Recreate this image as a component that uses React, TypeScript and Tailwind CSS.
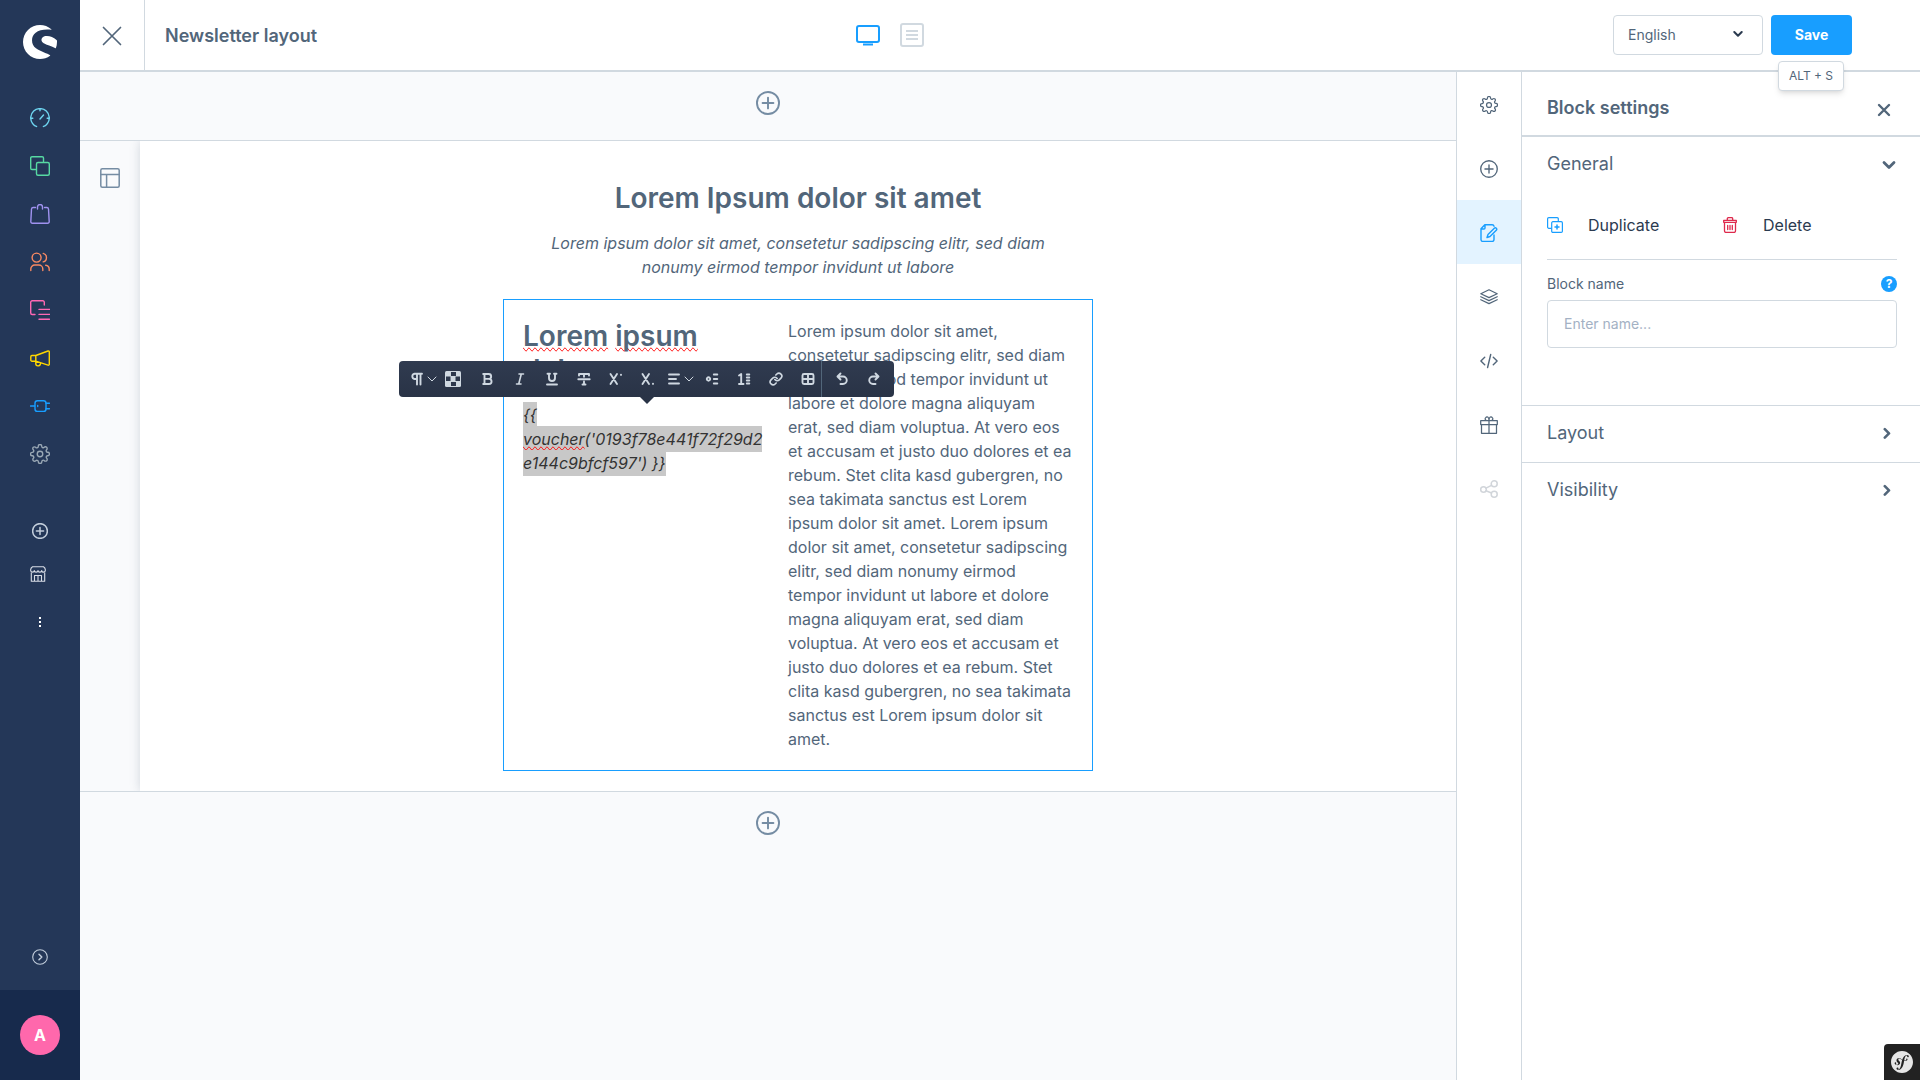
import { useState } from 'react'
import type { ReactNode } from 'react'
import { SiShopware, SiSymfony } from 'react-icons/si'

function Svg({ box = '0 0 20 20', className, width = 1.4, children }: { box?: string; className: string; width?: number; children: ReactNode }) {
  return (
    <svg
      viewBox={box}
      className={`shrink-0 ${className}`}
      fill="none"
      stroke="currentColor"
      strokeWidth={width}
      strokeLinecap="round"
      strokeLinejoin="round"
      aria-hidden="true"
    >
      {children}
    </svg>
  )
}

function GearIcon({ className }: { className: string }) {
  return (
    <Svg box="0.4 0.4 23.2 23.2" className={className} width={1.6}>
      <circle cx="12" cy="12" r="3.2" />
      <path d="M19.4 15a1.65 1.65 0 0 0 .33 1.82l.06.06a2 2 0 0 1 0 2.83 2 2 0 0 1-2.83 0l-.06-.06a1.65 1.65 0 0 0-1.82-.33 1.65 1.65 0 0 0-1 1.51V21a2 2 0 0 1-2 2 2 2 0 0 1-2-2v-.09A1.65 1.65 0 0 0 9 19.4a1.65 1.65 0 0 0-1.82.33l-.06.06a2 2 0 0 1-2.83 0 2 2 0 0 1 0-2.83l.06-.06a1.65 1.65 0 0 0 .33-1.82 1.65 1.65 0 0 0-1.51-1H3a2 2 0 0 1-2-2 2 2 0 0 1 2-2h.09A1.65 1.65 0 0 0 4.6 9a1.65 1.65 0 0 0-.33-1.82l-.06-.06a2 2 0 0 1 0-2.83 2 2 0 0 1 2.83 0l.06.06a1.65 1.65 0 0 0 1.82.33H9a1.65 1.65 0 0 0 1-1.51V3a2 2 0 0 1 2-2 2 2 0 0 1 2 2v.09a1.65 1.65 0 0 0 1 1.51 1.65 1.65 0 0 0 1.82-.33l.06-.06a2 2 0 0 1 2.83 0 2 2 0 0 1 0 2.83l-.06.06a1.65 1.65 0 0 0-.33 1.82V9a1.65 1.65 0 0 0 1.51 1H21a2 2 0 0 1 2 2 2 2 0 0 1-2 2h-.09a1.65 1.65 0 0 0-1.51 1z" />
    </Svg>
  )
}

function PlusCircle({ className, width = 1.25 }: { className: string; width?: number }) {
  return (
    <Svg className={className} width={width}>
      <circle cx="10" cy="10" r="9.2" />
      <path d="M10 5.5v9M5.5 10h9" />
    </Svg>
  )
}

const mainMenu = [
  {
    label: 'Dashboard',
    color: 'text-[#6ed5f0]',
    icon: (
      <Svg className="size-5">
        <path d="M6.6 18.5c-1.6 0-2.9-1.2-3.9-2.8A9.3 9.3 0 1 1 17.3 15.7c-1 1.6-2.3 2.8-3.9 2.8M10 .8v2M.8 10.2h2M19.2 10.2h-2M10 11l3.5-4" />
      </Svg>
    ),
  },
  {
    label: 'Catalogues',
    color: 'text-[#57d9a3]',
    icon: (
      <Svg className="size-5">
        <path d="M5.5 13.5H2A1.3 1.3 0 0 1 .7 12.2V2A1.3 1.3 0 0 1 2 .7h10.2A1.3 1.3 0 0 1 13.5 2v3.5" />
        <rect x="6.5" y="6.5" width="12.8" height="12.8" rx="1.5" />
      </Svg>
    ),
  },
  {
    label: 'Orders',
    color: 'text-[#a092f0]',
    icon: (
      <Svg className="size-5">
        <path d="M5.5 3.5H3.2A1.7 1.7 0 0 0 1.5 5L.8 17.6a1.6 1.6 0 0 0 1.6 1.7h15.2a1.6 1.6 0 0 0 1.6-1.7L18.5 5a1.7 1.7 0 0 0-1.7-1.5h-2.3" />
        <path d="M7.5 5V3a2.5 2.5 0 0 1 5 0v2" />
      </Svg>
    ),
  },
  {
    label: 'Customers',
    color: 'text-[#f88962]',
    icon: (
      <Svg className="size-5">
        <circle cx="6.6" cy="5.6" r="4.5" />
        <path d="M.8 18.500v-1.500a4 4 0 0 1 4-4h4a4 4 0 0 1 4 4v1.500M13.200 1.400a4.400 4.400 0 0 1 0 8.500M15.700 13.300a4 4 0 0 1 3.500 4v1.200" />
      </Svg>
    ),
  },
  {
    label: 'Content',
    color: 'text-[#ff68b4]',
    icon: (
      <Svg className="size-5">
        <path d="M5 14.500H2.200A1.500 1.500 0 0 1 .7 13V2.200A1.500 1.500 0 0 1 2.200.7h10.600a1.500 1.500 0 0 1 1.500 1.500V5M9 9.400h10.500M9 14.400h10.500M9 19.300h10.500" />
      </Svg>
    ),
  },
  {
    label: 'Marketing',
    color: 'text-[#ffd700]',
    icon: (
      <Svg className="size-5">
        <path d="M5.800 7.500 18 3a1 1 0 0 1 1.300 1v12.200a1 1 0 0 1-1.300 1L5.800 13.200zM5.800 7.500H2A1.200 1.200 0 0 0 .8 8.700V12A1.200 1.200 0 0 0 2 13.200h3.800M5.800 13.500v1.800a2.300 2.300 0 0 0 4.600.5" />
      </Svg>
    ),
  },
  {
    label: 'Extensions',
    color: 'text-[#189eff]',
    icon: (
      <Svg className="size-5">
        <path d="M.6 10h4M16 7.200h3.500M16 12.800h3.500M7.700 9.400v1.200" />
        <rect x="5" y="4.800" width="11" height="10.600" rx="2.500" />
      </Svg>
    ),
  },
  { label: 'Settings', color: 'text-[#9aa8b5]', icon: <GearIcon className="size-5" /> },
]

const railItems = [
  { label: 'Settings', icon: <GearIcon className="size-[18px]" /> },
  { label: 'Blocks', icon: <PlusCircle className="size-[18px]" width={1.5} /> },
  {
    label: 'Block settings',
    active: true,
    icon: (
      <Svg box="0 0 18 18" className="size-[18px]">
        <path d="M14 11v4.500a2 2 0 0 1-2 2H3a2 2 0 0 1-2-2V4.800L4.800.7H12a2 2 0 0 1 2 1.500M1 5h3a1 1 0 0 0 1-1V.8" />
        <path d="m8 10.500 6.300-6.300a1.400 1.400 0 0 1 2 2L10 12.500l-3 1z" />
      </Svg>
    ),
  },
  {
    label: 'Navigator',
    icon: (
      <Svg box="0 0 18 18" className="size-[18px]" width={1.25}>
        <path d="m9 1.800 8.200 3.900L9 9.600.8 5.700zM.8 8.700 9 12.600l8.200-3.900M.8 11.700 9 15.600l8.200-3.900" />
      </Svg>
    ),
  },
  {
    label: 'Code',
    icon: (
      <Svg box="0 0 18 18" className="size-[18px]">
        <path d="M4.700 5.300.9 9l3.800 3.700M13.300 5.300 17.100 9l-3.800 3.700M10.700 2.500 7.600 15.500" />
      </Svg>
    ),
  },
  {
    label: 'Elements',
    icon: (
      <Svg box="0 0 18 18" className="size-[18px]" width={1.25}>
        <path d="M.7 4.700h16.600v3.800H.7zM1.500 8.500v8.800h15V8.500M9 4.700v12.600M9 4.500H6.800A1.700 1.700 0 0 1 5.700 1.600C6.800.2 9 .6 9 4.500zM9 4.500h2.200a1.700 1.700 0 0 0 1.100-2.900C11.200.2 9 .6 9 4.500z" />
      </Svg>
    ),
  },
  {
    label: 'Layout assignment',
    disabled: true,
    icon: (
      <Svg box="0 0 18 18" className="size-[18px]" width={1.5}>
        <circle cx="3.500" cy="9.500" r="2.800" />
        <circle cx="14.200" cy="3.800" r="3" />
        <circle cx="14.200" cy="14.200" r="3" />
        <path d="m6 8.200 5.500-2.900M6 10.800l5.500 2.200" />
      </Svg>
    ),
  },
]

// Drawn on a 16px grid
const toolbarItems = [
  { label: 'Format', wide: true, size: 'w-7', d: 'M7 8H5.500a2.700 2.700 0 0 1 0-5.300H13M8 3v10.500M11.500 3v10.500' },
  { label: 'Text color', size: 'w-8 mr-[3px]', checker: true },
  { label: 'Bold', size: 'w-8', d: 'M4.500 3v10M3.200 3h5.500a2.400 2.400 0 0 1 0 4.900H5M9 7.900a2.500 2.500 0 0 1 0 5.100H3.200' },
  { label: 'Italic', size: 'w-8', d: 'M7 3h4.500M4.500 13H9M9.300 3l-2.600 10', thin: true },
  { label: 'Underline', size: 'w-8', d: 'M3.500 2.800H6M10 2.800h2.500M5 3v4a3 3 0 0 0 6 0V3M3 13.500h10' },
  { label: 'Strikethrough', size: 'w-8', d: 'M3 4.500V3h10v1.500M8 3v2.800M2.300 8.200h11.400M8 10.500v3M6.500 13.500h3' },
  { label: 'Superscript', size: 'w-8', d: 'M2.500 3l6.500 10M9 3l-6.500 10M13 3.600v.3' },
  { label: 'Subscript', size: 'w-8', d: 'M2.500 3l6.500 10M9 3l-6.500 10M13 12.600v.3' },
  { label: 'Alignment', wide: true, size: 'w-8', d: 'M3 3.500h10M3 8h7M3 12.500h10' },
  { label: 'Bullet list', size: 'w-8', d: 'M2.800 8a1.700 1.700 0 1 0 3.400 0 1.700 1.700 0 1 0-3.400 0M9.800 3.500h3.500M9.800 8h3.500M9.800 12.500h3.500' },
  { label: 'Numbered list', size: 'w-8', d: 'M3 4.500 5.200 3v10M3 13h4.500M10.800 3.500h2.500M10.800 6.500h2.500M10.800 9.500h2.500M10.800 12.500h2.500' },
  { label: 'Link', size: 'w-8', link: true },
  {
    label: 'Table',
    size: 'w-[29px] pl-[3px]',
    d: 'M4 3h8a1.500 1.500 0 0 1 1.500 1.500v7A1.500 1.500 0 0 1 12 13H4a1.500 1.500 0 0 1-1.500-1.500v-7A1.500 1.500 0 0 1 4 3zM8 3v10M2.500 8h11',
  },
]

const historyItems = [
  { label: 'Undo', d: 'M6.500 2.500 3.500 5.500l3 3M4 5.500h5a3.700 3.700 0 0 1 0 7.500H6.500' },
  { label: 'Redo', d: 'M9.500 2.500l3 3-3 3M12 5.500H7a3.700 3.700 0 0 0 0 7.500h2.500' },
]

function ToolbarIcon({ item }: { item: { d?: string; checker?: boolean; link?: boolean; thin?: boolean } }) {
  if (item.checker) {
    return (
      <svg viewBox="0 0 16 16" className="size-4 shrink-0" aria-hidden="true">
        <rect width="16" height="16" rx="1.500" fill="#cfd8e1" />
        <path fill="#2d384d" d="M6 1h5v4H6zM1 5.500h4.500V10H1zM10.500 5.500H15V10h-4.500zM6 11h5v4H6z" />
      </svg>
    )
  }
  if (item.link) {
    return (
      <Svg box="0 0 24 24" className="size-3.5" width={2.8}>
        <path d="M10 13a5 5 0 0 0 7.540.540l3-3a5 5 0 0 0-7.070-7.070l-1.720 1.710" />
        <path d="M14 11a5 5 0 0 0-7.540-.540l-3 3a5 5 0 0 0 7.070 7.070l1.710-1.710" />
      </Svg>
    )
  }
  return (
    <Svg box="0 0 16 16" className="size-4" width={item.thin ? 1.6 : 1.9}>
      <path d={item.d} />
    </Svg>
  )
}

function Toolbar() {
  return (
    <div className="absolute top-[61px] -left-[105px] z-10 flex h-9 rounded bg-linear-to-b from-[#303b50] to-[#293346] text-[#cfd8e1]">
      <div className="flex items-center border-r border-[#52667a] pl-2.5">
        {toolbarItems.map((item) => (
          <button
            key={item.label}
            type="button"
            aria-label={item.label}
            className={`flex h-9 shrink-0 items-center justify-center gap-0.5 ${item.size}`}
          >
            <ToolbarIcon item={item} />
            {item.wide && (
              <Svg box="0 0 10 10" className="size-2.5" width={1}>
                <path d="m1 3 4 4 4-4" />
              </Svg>
            )}
          </button>
        ))}
      </div>
      <div className="flex items-center px-1">
        {historyItems.map((item) => (
          <button key={item.label} type="button" aria-label={item.label} className="flex h-9 w-8 items-center justify-center">
            <ToolbarIcon item={item} />
          </button>
        ))}
      </div>
      <div className="absolute top-full left-1/2 -translate-x-1/2 border-x-[7px] border-t-[7px] border-x-transparent border-t-[#293346]" />
    </div>
  )
}

function Misspelled({ children }: { children: ReactNode }) {
  return <span className="[text-decoration-line:spelling-error]">{children}</span>
}

function Sidebar() {
  return (
    <aside className="flex w-20 shrink-0 flex-col items-center bg-[#243758]">
      <SiShopware className="mt-[25px] size-[34px] text-white" />
      <nav className="mt-[35px] flex flex-col" aria-label="Main menu">
        {mainMenu.map((item) => (
          <a key={item.label} href="#" aria-label={item.label} className={`flex h-12 w-20 items-center justify-center ${item.color}`}>
            {item.icon}
          </a>
        ))}
      </nav>
      <div className="mt-[34px] flex flex-col items-center">
        <button type="button" aria-label="Add sales channel" className="flex h-[38px] w-20 items-center justify-center text-[#c2cddb]">
          <PlusCircle className="size-4" width={1.9} />
        </button>
        <a href="#" aria-label="Storefront" className="flex h-12 w-20 items-center pl-[30px] text-[#d8dde6]">
          <Svg box="0 0 16 16" className="size-4" width={1.1}>
            <path d="M1.300 6v9.300h13.400V6M.7 4.500A3.800 3.800 0 0 1 2.500.7h11a3.800 3.800 0 0 1 1.800 3.800c0 2.200-3.600 2.200-3.600 0 0 2.200-3.700 2.200-3.700 0 0 2.200-3.700 2.200-3.700 0 0 2.200-3.600 2.200-3.600 0zM4.500 15V9.500h7V15M8 9.500V15" />
          </Svg>
        </a>
        <button type="button" aria-label="More" className="flex h-12 w-20 items-center justify-center text-white">
          <svg viewBox="0 0 4 12" className="h-3 w-1" fill="currentColor" aria-hidden="true">
            <path d="M1 1h2v2H1zM1 5h2v2H1zM1 9h2v2H1z" />
          </svg>
        </button>
      </div>
      <button type="button" aria-label="Expand menu" className="mt-auto mb-[17px] flex h-8 w-20 items-center justify-center text-[#c2cddb]">
        <Svg box="0 0 16 16" className="size-4" width={1.1}>
          <circle cx="8" cy="8" r="7.300" />
          <path d="M7 5.200 9.800 8 7 10.800" strokeWidth="1.500" />
        </Svg>
      </button>
      <div className="flex h-[90px] w-full items-center justify-center bg-[#172a4c]">
        <button type="button" aria-label="Account" className="size-10 rounded-full bg-[#ff68ac] text-base font-bold text-white">
          A
        </button>
      </div>
    </aside>
  )
}

function Header() {
  return (
    <header className="flex h-[72px] shrink-0 border-b-2 border-[#d1d9e0] bg-white">
      <button type="button" aria-label="Close" className="flex w-[65px] items-center justify-center border-r border-[#d1d9e0] pt-0.5">
        <Svg className="size-5" width={1.7}>
          <path d="m1.500 1.500 17 17M18.500 1.500l-17 17" />
        </Svg>
      </button>
      <div className="grid flex-1 grid-cols-[5fr_auto_7fr] items-center">
        <h1 className="pt-0.5 pl-5 text-lg font-semibold">Newsletter layout</h1>
        <div className="flex items-center gap-5">
          <button type="button" aria-label="Desktop view" className="text-[#189eff]">
            <Svg box="0 0 24 24" className="size-6" width={2}>
              <rect x="1" y="3" width="22" height="16" rx="2" />
              <path d="M7 21.500h10" strokeLinecap="butt" />
            </Svg>
          </button>
          <button type="button" aria-label="Form view" className="text-[#d1d9e0]">
            <Svg box="0 0 24 24" className="size-6" width={2}>
              <rect x="1" y="1" width="22" height="22" rx="2" />
              <path d="M6 8h12M6 12h12M6 16h12" strokeLinecap="butt" />
            </Svg>
          </button>
        </div>
        <div className="flex items-center justify-end gap-2 pr-[68px]">
          <div className="relative">
            <select aria-label="Language" className="h-10 w-[150px] appearance-none rounded border border-[#d1d9e0] bg-white pl-3.5 text-sm">
              <option>English</option>
            </select>
            <Svg box="0 0 10 8" className="pointer-events-none absolute top-[15px] right-5 h-2 w-2.5 text-[#2b3a4f]" width={2}>
              <path d="m1.300 2 3.700 3.700L8.700 2" />
            </Svg>
          </div>
          <div className="relative">
            <button type="button" className="h-10 w-[81px] rounded bg-[#189eff] text-sm font-bold text-white">
              Save
            </button>
            <div className="absolute top-[46px] left-[7px] z-20 flex h-[30px] w-[66px] items-center justify-center rounded border border-[#d1d9e0] bg-white text-xs whitespace-nowrap shadow-md">
              ALT + S
            </div>
          </div>
        </div>
      </div>
    </header>
  )
}

function AddSection() {
  return (
    <div className="flex h-[62px] items-center justify-center">
      <button type="button" aria-label="Add section" className="text-[#758ca3]">
        <PlusCircle className="size-6" width={1.6} />
      </button>
    </div>
  )
}

function Canvas() {
  return (
    <main className="min-w-0 flex-1 bg-[#f9fafc]">
      <div className="pb-1.5">
        <AddSection />
      </div>
      <section className="flex border-y border-[#d1d9e0]">
        <div className="flex w-[60px] shrink-0 justify-center pt-[27px]">
          <button type="button" aria-label="Section settings" className="h-5 text-[#758ca3]">
            <Svg className="size-5" width={1.5}>
              <rect x=".8" y=".8" width="18.400" height="18.400" rx="1.500" />
              <path d="M.8 6.600h18.400M6.600 6.600v12.600" />
            </Svg>
          </button>
        </div>
        <div className="flex-1 bg-white py-5 shadow-[0_0_10px_0_rgba(82,102,122,0.24)] [clip-path:inset(0_0_0_-12px)]">
          <div className="mx-auto w-[590px]">
            <div className="p-5 text-center">
              <h2 className="text-[28px] leading-[34px] font-semibold">Lorem Ipsum dolor sit amet</h2>
              <p className="mt-4 px-5 text-base italic">
                Lorem ipsum dolor sit amet, consetetur sadipscing elitr, sed diam nonumy eirmod tempor invidunt ut labore
              </p>
            </div>
            <div className="relative flex border border-[#189eff]">
              <Toolbar />
              <div className="w-[264px] shrink-0 py-[19px] pl-[19px]">
                <h2 className="text-[28px] leading-[34px] font-semibold">
                  <Misspelled>Lorem</Misspelled> <Misspelled>ipsum</Misspelled>
                  <br />
                  dolor
                </h2>
                <p className="mt-4 text-base break-all text-[#333] italic">
                  <span className="bg-[#c8c8c8] py-[3px]">
                    {'{{ '}
                    <br />
                    <Misspelled>voucher</Misspelled>('0193f78e441f72f29d2
                    <br />
                    {"e144c9bfcf597') }}"}
                  </span>
                </p>
              </div>
              <p className="flex-1 py-[19px] pr-[19px] pl-5 text-base">
                Lorem ipsum dolor sit amet, consetetur sadipscing elitr, sed diam nonumy eirmod tempor invidunt ut labore et dolore magna
                aliquyam erat, sed diam voluptua. At vero eos et accusam et justo duo dolores et ea rebum. Stet clita kasd gubergren, no sea
                takimata sanctus est Lorem ipsum dolor sit amet. Lorem ipsum dolor sit amet, consetetur sadipscing elitr, sed diam nonumy
                eirmod tempor invidunt ut labore et dolore magna aliquyam erat, sed diam voluptua. At vero eos et accusam et justo duo dolores
                et ea rebum. Stet clita kasd gubergren, no sea takimata sanctus est Lorem ipsum dolor sit amet.
              </p>
            </div>
          </div>
        </div>
      </section>
      <AddSection />
    </main>
  )
}

function CollapsedGroup({ title }: { title: string }) {
  return (
    <button type="button" className="flex h-[57px] w-full items-center justify-between border-t border-[#d1d9e0] pr-[29px] pb-0.5 pl-[25px] text-lg">
      {title}
      <Svg box="0 0 8 12" className="h-3 w-2" width={2.6}>
        <path d="m1.800 2.200 4.200 4.200-4.200 4.200" />
      </Svg>
    </button>
  )
}

function SettingsPanel() {
  const [name, setName] = useState('')

  return (
    <section className="w-[398px] shrink-0 bg-white">
      <div className="flex h-[65px] items-center justify-between border-b-2 border-[#d1d9e0] pt-2 pr-[29px] pl-[25px]">
        <h2 className="text-lg font-semibold">Block settings</h2>
        <button type="button" aria-label="Close panel" className="pt-1">
          <Svg box="0 0 14 14" className="size-3.5" width={2.4}>
            <path d="m2 2 10 10M12 2 2 12" />
          </Svg>
        </button>
      </div>
      <button type="button" className="flex h-[54px] w-full items-center justify-between pr-6 pl-[25px] text-lg">
        General
        <Svg box="0 0 14 12" className="h-3 w-3.5" width={2.8}>
          <path d="m2 4.500 5 5 5-5" />
        </Svg>
      </button>
      <div className="pr-[23px] pl-[25px]">
        <div className="grid h-[69px] grid-cols-2 border-b border-[#d1d9e0] text-base text-[#2b3a4f]">
          <button type="button" className="flex items-center gap-[25px]">
            <Svg box="0 0 16 16" className="size-4 text-[#189eff]" width={1.2}>
              <path d="M4 11.300H1.800A1.200 1.200 0 0 1 .6 10.100V1.800A1.200 1.200 0 0 1 1.800.6h8.300a1.200 1.200 0 0 1 1.200 1.200V4" />
              <rect x="4.700" y="4.700" width="10.700" height="10.700" rx="1.200" />
              <path d="M10 8v4M8 10h4" strokeWidth="1.500" />
            </Svg>
            Duplicate
          </button>
          <button type="button" className="flex items-center gap-[25px]">
            <Svg box="0 0 16 16" className="size-4 text-[#de294c]" width={1.3}>
              <path d="M1.700 3.300h12.600v2H1.700zM2.500 5.300v8.700a1.400 1.400 0 0 0 1.400 1.400h8.200a1.400 1.400 0 0 0 1.400-1.400V5.300M5.300 3V1.800A1.200 1.200 0 0 1 6.500.6h3a1.200 1.200 0 0 1 1.200 1.200V3M5.700 8.500v4M8 8.500v4M10.300 8.500v4" />
            </Svg>
            Delete
          </button>
        </div>
        <div className="mt-4 flex items-center justify-between">
          <label htmlFor="block-name" className="text-sm leading-4">
            Block name
          </label>
          <button type="button" aria-label="Help" className="flex size-4 items-center justify-center rounded-full bg-[#189eff] text-xs font-bold text-white">
            ?
          </button>
        </div>
        <input
          id="block-name"
          value={name}
          onChange={(e) => setName(e.target.value)}
          placeholder="Enter name..."
          className="mt-2 mb-[57px] block h-12 w-full rounded border border-[#d1d9e0] px-4 pb-0.5 text-sm placeholder:text-[#a3b1c4]"
        />
      </div>
      <CollapsedGroup title="Layout" />
      <CollapsedGroup title="Visibility" />
    </section>
  )
}

export default function App() {
  return (
    <div className="flex min-h-screen bg-white font-['Inter',sans-serif] text-[#52667a]">
      <Sidebar />
      <div className="flex min-w-0 flex-1 flex-col">
        <Header />
        <div className="flex flex-1">
          <Canvas />
          <nav className="flex w-[66px] shrink-0 flex-col border-x border-[#d1d9e0] bg-white" aria-label="Editor panels">
            {railItems.map((item) => (
              <button
                key={item.label}
                type="button"
                aria-label={item.label}
                disabled={item.disabled}
                className={`flex h-16 items-center justify-center pt-0.5 ${
                  item.active ? 'bg-[#e3f3ff] text-[#189eff]' : item.disabled ? 'text-[#d1d5da]' : ''
                }`}
              >
                {item.icon}
              </button>
            ))}
          </nav>
          <SettingsPanel />
        </div>
      </div>
      <button type="button" aria-label="Symfony toolbar" className="fixed right-0 bottom-0 flex size-9 items-center justify-center rounded-tl bg-[#222]">
        <SiSymfony className="size-[22px] text-[#e6e6e6]" />
      </button>
    </div>
  )
}
